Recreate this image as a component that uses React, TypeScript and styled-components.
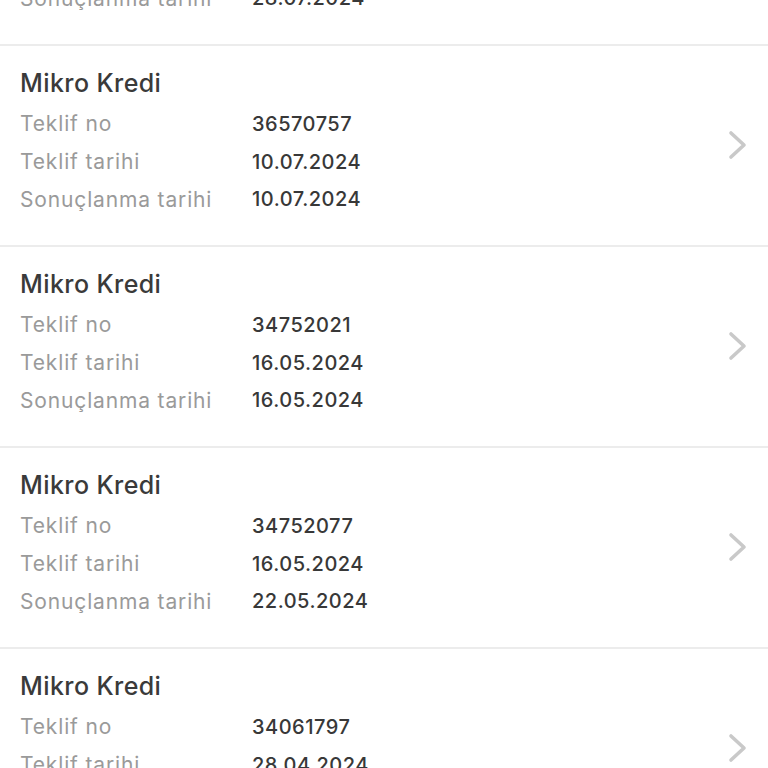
import styled, { createGlobalStyle } from "styled-components";

const GlobalStyle = createGlobalStyle`
  html, body {
    margin: 0;
    padding: 0;
    background: #ffffff;
    overflow: hidden;
  }
  body {
    font-family: "Inter", "Noto Sans", sans-serif;
    -webkit-font-smoothing: antialiased;
  }
`;

const Screen = styled.div`
  width: 768px;
  height: 768px;
  overflow: hidden;
  background: #ffffff;
`;

// the list is scrolled, the first card is partly above the top edge
const OfferList = styled.ul`
  list-style: none;
  margin: -155px 0 0 0;
  padding: 0;
`;

const OfferCard = styled.li`
  display: flex;
  align-items: center;
  box-sizing: border-box;
  height: 201px;
  padding: 21px 20px 27px 20px;
  border-bottom: 2px solid #ececec;
  cursor: pointer;
`;

const OfferBody = styled.div`
  flex: 1;
  display: flex;
  flex-direction: column;
  align-self: stretch;
`;

const OfferTitle = styled.div`
  height: 32px;
  line-height: 32px;
  margin-bottom: 6px;
  font-size: 25px;
  font-weight: 500;
  letter-spacing: 0.4px;
  color: #3a3a3a;
`;

const InfoRow = styled.div`
  display: grid;
  grid-template-columns: 232px 1fr;
  height: 38px;
  align-items: center;
  font-size: 21px;
`;

const InfoLabel = styled.span`
  color: #9a9a9a;
  letter-spacing: 0.85px;
`;

const InfoValue = styled.span`
  font-size: 20px;
  color: #383838;
  font-weight: 500;
  letter-spacing: 0.5px;
`;

const Chevron = styled.svg`
  width: 20px;
  height: 30px;
  flex-shrink: 0;
  margin-top: 4px;
`;

type Offer = {
  title: string;
  no: string;
  date: string;
  endDate: string;
};

const offers: Offer[] = [
  { title: "Mikro Kredi", no: "36570800", date: "28.07.2024", endDate: "28.07.2024" },
  { title: "Mikro Kredi", no: "36570757", date: "10.07.2024", endDate: "10.07.2024" },
  { title: "Mikro Kredi", no: "34752021", date: "16.05.2024", endDate: "16.05.2024" },
  { title: "Mikro Kredi", no: "34752077", date: "16.05.2024", endDate: "22.05.2024" },
  { title: "Mikro Kredi", no: "34061797", date: "28.04.2024", endDate: "28.04.2024" },
];

const OfferItem = ({ title, no, date, endDate }: Offer) => (
  <OfferCard>
    <OfferBody>
      <OfferTitle>{title}</OfferTitle>
      <InfoRow>
        <InfoLabel>Teklif no</InfoLabel>
        <InfoValue>{no}</InfoValue>
      </InfoRow>
      <InfoRow>
        <InfoLabel>Teklif tarihi</InfoLabel>
        <InfoValue>{date}</InfoValue>
      </InfoRow>
      <InfoRow>
        <InfoLabel>Sonuçlanma tarihi</InfoLabel>
        <InfoValue>{endDate}</InfoValue>
      </InfoRow>
    </OfferBody>
    <Chevron viewBox="0 0 20 30">
      <path
        d="M3 3 L16 15 L3 27"
        fill="none"
        stroke="#c9c9c9"
        strokeWidth="3.6"
        strokeLinecap="round"
        strokeLinejoin="round"
      />
    </Chevron>
  </OfferCard>
);

export default function App() {
  return (
    <Screen>
      <GlobalStyle />
      <OfferList>
        {offers.map((o, i) => (
          <OfferItem key={i} {...o} />
        ))}
      </OfferList>
    </Screen>
  );
}
